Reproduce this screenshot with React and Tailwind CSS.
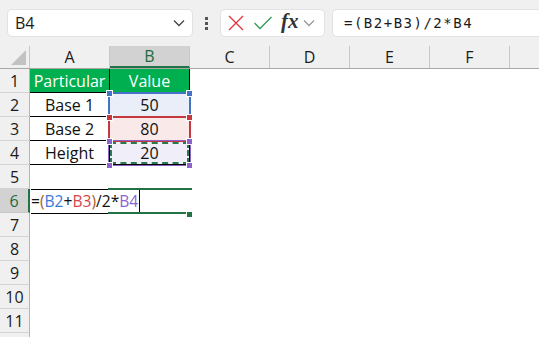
import React from 'react';

const COLS = ['A', 'B', 'C', 'D', 'E', 'F', ''];

const ROWS = [
  { n: 1, a: 'Particular', b: 'Value', head: true },
  { n: 2, a: 'Base 1', b: '50', fill: 'bg-[#e9eef8]' },
  { n: 3, a: 'Base 2', b: '80', fill: 'bg-[#fae9e9]' },
  { n: 4, a: 'Height', b: '20', fill: 'bg-[#f0eef8]' },
  { n: 5 },
  { n: 6, active: true },
  { n: 7 },
  { n: 8 },
  { n: 9 },
  { n: 10 },
  { n: 11 },
  { n: '' },
];

const Chevron = ({ className = '', color = '#444' }) => (
  <svg width="12" height="8" viewBox="0 0 12 8" className={className}>
    <path d="M1 1.5 L6 6.5 L11 1.5" fill="none" stroke={color} strokeWidth="1.3" />
  </svg>
);

const Toolbar = () => (
  <div className="h-[46px] bg-[#f0f0f0] flex items-start pt-[9px] pl-[7px]">
    <div className="w-[186px] h-[28px] bg-white rounded-[5px] border border-[#e2e2e2] flex items-center justify-between pl-[7px] pr-[7px]">
      <span className="text-[16px] text-[#1b1b1b] leading-none">B4</span>
      <Chevron />
    </div>
    <div className="w-[27px] h-[28px] flex flex-col items-center justify-center gap-[2px]">
      <span className="w-[3px] h-[3px] bg-[#555]" />
      <span className="w-[3px] h-[3px] bg-[#555]" />
      <span className="w-[3px] h-[3px] bg-[#555]" />
    </div>
    <div className="w-[105px] h-[28px] bg-white rounded-[5px] border border-[#e2e2e2] flex items-center pl-[6px]">
      <svg width="18" height="18" viewBox="0 0 18 18">
        <path d="M2 2 L16 16 M16 2 L2 16" stroke="#e3393f" strokeWidth="1.4" fill="none" />
      </svg>
      <svg width="20" height="18" viewBox="0 0 20 18" className="ml-[8px]">
        <path d="M1.5 9 L7 14.5 L18.5 3" stroke="#2f9a53" strokeWidth="1.3" fill="none" />
      </svg>
      <span className="ml-[8px] font-['Liberation_Serif',serif] italic font-bold text-[21px] leading-none text-[#333] -mt-[3px]">fx</span>
      <Chevron className="ml-[4px]" color="#999" />
    </div>
    <div className="ml-[7px] flex-1 h-[28px] bg-white rounded-l-[5px] border border-r-0 border-[#e2e2e2] flex items-center pl-[11px]">
      <span className="font-['DejaVu_Sans_Mono',monospace] text-[14px] tracking-[1.5px] text-[#1b1b1b]">=(B2+B3)/2*B4</span>
    </div>
  </div>
);

const Handle = ({ className }) => (
  <div className={'absolute w-[5px] h-[5px] outline outline-1 outline-white ' + className} />
);

const Sheet = () => (
  <div className="relative">
    <div className="flex h-[23px] bg-[#f0f0f0] border-b border-[#a8a8a8]">
      <div className="w-[30px] shrink-0 border-r border-[#c8c8c8] flex items-end justify-end pr-[3px] pb-[3px]">
        <svg width="15" height="15" viewBox="0 0 15 15">
          <path d="M15 0 L15 15 L0 15 Z" fill="#c2c2c2" />
        </svg>
      </div>
      {COLS.map((c, i) => (
        <div
          key={i}
          className={
            c === 'B'
              ? 'w-[80px] shrink-0 bg-[#d2d2d2] border-r border-[#c8c8c8] border-b-2 border-b-[#217346] flex items-center justify-center text-[16px] text-[#1d6b40]'
              : 'w-[80px] shrink-0 border-r border-[#c8c8c8] flex items-center justify-center text-[16px] text-[#1b1b1b]'
          }
        >
          {c}
        </div>
      ))}
    </div>

    {ROWS.map((r, i) => (
      <div key={i} className="flex h-[24px]">
        <div
          className={
            r.active
              ? 'w-[30px] shrink-0 bg-[#d2d2d2] border-r-2 border-[#217346] border-b border-b-[#c8c8c8] flex items-center justify-center text-[16px] text-[#1d6b40]'
              : 'w-[30px] shrink-0 bg-[#f0f0f0] border-r border-[#b4b4b4] border-b border-b-[#d4d4d4] flex items-center justify-center text-[16px] text-[#1b1b1b]'
          }
        >
          {r.n}
        </div>
        {r.a ? (
          <>
            <div
              className={
                r.head
                  ? 'w-[80px] shrink-0 border-r border-b border-black bg-[#00b050] text-white text-[16px] flex items-center justify-center'
                  : 'w-[80px] shrink-0 border-r border-b border-black text-[#111] text-[16px] flex items-center justify-center'
              }
            >
              {r.a}
            </div>
            <div
              className={
                r.head
                  ? 'w-[80px] shrink-0 border-r border-b border-black bg-[#00b050] text-white text-[16px] flex items-center justify-center'
                  : 'w-[80px] shrink-0 border-r border-b border-black text-[#111] text-[16px] flex items-center justify-center ' + r.fill
              }
            >
              {r.b}
            </div>
          </>
        ) : null}
      </div>
    ))}

    {/* reference boxes */}
    <div className="absolute left-[108px] top-[46px] w-[83px] h-[26px] border-2 border-[#4472c4]" />
    <Handle className="left-[107px] top-[45px] bg-[#4472c4]" />
    <Handle className="left-[187px] top-[45px] bg-[#4472c4]" />
    <div className="absolute left-[108px] top-[70px] w-[83px] h-[26px] border-2 border-[#c3393f]" />
    <Handle className="left-[107px] top-[69px] bg-[#c3393f]" />
    <Handle className="left-[187px] top-[69px] bg-[#c3393f]" />
    <div className="absolute left-[108px] top-[94px] w-[83px] h-[26px] border border-[#8e63c9] p-[1px]">
      <div className="w-full h-full border-2 border-dashed border-[#2a7a4c]" />
    </div>
    <Handle className="left-[107px] top-[93px] bg-[#8e63c9]" />
    <Handle className="left-[187px] top-[93px] bg-[#8e63c9]" />
    <Handle className="left-[107px] top-[117px] bg-[#8e63c9]" />
    <Handle className="left-[187px] top-[117px] bg-[#8e63c9]" />

    {/* in-cell edit */}
    <div className="absolute left-[31px] top-[143px] w-[109px] h-[25px] bg-white border-t border-b border-r border-black flex items-center text-[15.6px] whitespace-nowrap overflow-hidden">
      <span className="text-[#111]">=</span>
      <span className="text-[#a8601e]">(</span>
      <span className="text-[#3c78d8]">B2</span>
      <span className="text-[#111]">+</span>
      <span className="text-[#d9434a]">B3</span>
      <span className="text-[#a8601e]">)</span>
      <span className="text-[#111]">/2*</span>
      <span className="text-[#8e63d6]">B4</span>
    </div>
    <div className="absolute left-[108px] top-[142px] w-[84px] h-[2px] bg-[#217346]" />
    <div className="absolute left-[108px] top-[166px] w-[79px] h-[2px] bg-[#217346]" />
    <div className="absolute left-[187px] top-[166px] w-[5px] h-[5px] bg-[#217346] outline outline-1 outline-white" />
  </div>
);

export default function App() {
  return (
    <div className="w-[539px] h-[337px] overflow-hidden bg-white font-['Open_Sans',sans-serif] select-none">
      <Toolbar />
      <Sheet />
    </div>
  );
}
